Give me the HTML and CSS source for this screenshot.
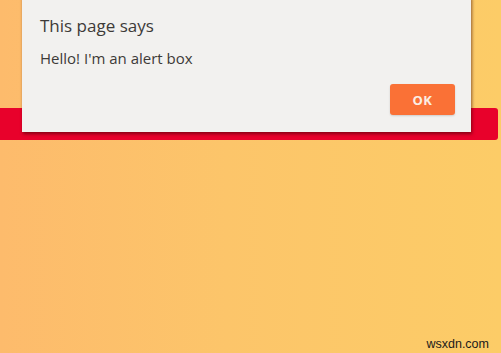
FILE: index.html
```html
<!DOCTYPE html>
<html>
<head>
<meta charset="utf-8">
<link rel="stylesheet" href="styles.css">
</head>
<body>
<div class="page">
  <div class="redbar"></div>
  <div class="watermark">wsxdn.com</div>
</div>
<div class="dialog">
  <div class="title">This page says</div>
  <div class="message">Hello! I'm an alert box</div>
  <div class="actions"><button class="ok">OK</button></div>
</div>
</body>
</html>
```
FILE: styles.css
```css
html, body {
  margin: 0;
  padding: 0;
  width: 501px;
  height: 353px;
  overflow: hidden;
}
body {
  background: linear-gradient(90deg, #fdbb6c 0%, #fcc56a 45%, #fccc67 100%);
  font-family: "Open Sans", "Noto Sans", sans-serif;
  position: relative;
}
.page {
  height: 353px;
  display: flex;
  flex-direction: column;
  padding-top: 108px;
  box-sizing: border-box;
}
.redbar {
  height: 32px;
  width: 498px;
  background: #e8012b;
  border-radius: 0 3px 3px 0;
}
.watermark {
  margin-top: auto;
  align-self: flex-end;
  margin-right: 12px;
  margin-bottom: 2px;
  font-family: "Liberation Sans", Arial, sans-serif;
  font-size: 12.5px;
  color: #1a1a1a;
}
.dialog {
  position: absolute;
  left: 22px;
  top: -4px;
  width: 449px;
  height: 136px;
  background: #f2f1ef;
  box-shadow: 1px 2px 3px rgba(60, 0, 0, 0.55);
  box-sizing: border-box;
  padding: 18px 16px 0 18px;
  display: flex;
  flex-direction: column;
}
.title {
  font-size: 17px;
  color: #3d3a38;
  line-height: 24px;
}
.message {
  font-size: 15px;
  color: #3d3a38;
  line-height: 20px;
  margin-top: 10px;
}
.actions {
  display: flex;
  justify-content: flex-end;
  margin-top: 16px;
}
.ok {
  width: 65px;
  height: 31px;
  border: none;
  border-radius: 3px;
  background: #fa7136;
  color: #fbeee4;
  font-family: "Open Sans", "Noto Sans", sans-serif;
  font-weight: 700;
  font-size: 13px;
  letter-spacing: 0.5px;
  box-shadow: 0 1px 2px rgba(0,0,0,0.15);
}
```
